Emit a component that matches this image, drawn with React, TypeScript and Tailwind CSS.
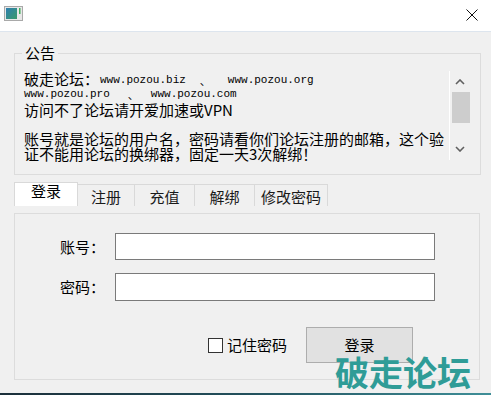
import React from "react";

const TABS = [
  { label: "登录", width: "w-[64px]" },
  { label: "注册", width: "w-[57px]" },
  { label: "充值", width: "w-[60px]" },
  { label: "解绑", width: "w-[60px]" },
  { label: "修改密码", width: "w-[73px]" },
];

function AppIcon() {
  return (
    <svg width="19" height="15" viewBox="0 0 19 15">
      <defs>
        <linearGradient id="ic" x1="0" y1="0" x2="1" y2="1">
          <stop offset="0" stopColor="#2f7fb0" />
          <stop offset="1" stopColor="#3a9a6a" />
        </linearGradient>
      </defs>
      <rect x="0.5" y="0.5" width="18" height="14" fill="#e8e8e8" stroke="#a9a9a9" />
      <rect x="2" y="2" width="11" height="11" fill="url(#ic)" />
      <rect x="15" y="2" width="1.5" height="6" fill="#3fae5b" />
    </svg>
  );
}

function Chevron({ up }: { up?: boolean }) {
  return (
    <svg width="10" height="6" viewBox="0 0 10 6">
      <path
        d={up ? "M1 5 L5 1 L9 5" : "M1 1 L5 5 L9 1"}
        fill="none"
        stroke="#606060"
        strokeWidth="1.6"
      />
    </svg>
  );
}

// urls in the notice are drawn in a small serif mono face
const url = "font-['Liberation_Mono',monospace] text-[11px] leading-[13px] whitespace-pre";
const dun = "text-[11px] leading-[13px]";

export default function App() {
  return (
    <div className="relative flex h-[395px] w-[491px] flex-col overflow-hidden font-['Noto_Sans_CJK_SC',sans-serif] text-black">
      {/* title bar */}
      <div className="flex h-[32px] items-start justify-between border-b border-[#dde5ee] bg-white">
        <div className="ml-[4px] mt-[6px]">
          <AppIcon />
        </div>
        <svg className="mr-[13px] mt-[9px]" width="12" height="12" viewBox="0 0 12 12">
          <path d="M0.5 0.5 L11.5 11.5 M11.5 0.5 L0.5 11.5" stroke="#111" strokeWidth="1" />
        </svg>
      </div>

      {/* body */}
      <div className="flex flex-1 flex-col bg-[#f0f0f0] pl-[14px]">
        <fieldset className="mt-[13px] w-[467px] border border-[#dcdcdc] pb-[14px]">
          <legend className="ml-[7px] px-[3px] text-[15px] leading-[16px]">公告</legend>
          <div className="mt-[10px] flex h-[89px] pl-[9px] pr-[11px]">
            <div className="w-[425px] text-[15px]">
              <div className="flex h-[16px] items-end leading-[16px]">
                <span className="shrink-0 whitespace-nowrap pr-[1px]">破走论坛：</span>
                <span className={url}>www.pozou.biz</span>
                <span className={`ml-[14px] ${dun}`}>、</span>
                <span className={`ml-[17px] ${url}`}>www.pozou.org</span>
              </div>
              <div className="flex h-[15px] items-center">
                <span className={url}>www.pozou.pro</span>
                <span className={`ml-[18px] ${dun}`}>、</span>
                <span className={`ml-[12px] ${url}`}>www.pozou.com</span>
              </div>
              <div className="h-[15px] leading-[15px]">访问不了论坛请开爱加速或VPN</div>
              <div className="h-[15px]" />
              <div className="h-[14px] leading-[14px] whitespace-nowrap">
                账号就是论坛的用户名，密码请看你们论坛注册的邮箱，这个验
              </div>
              <div className="h-[14px] leading-[15px] whitespace-nowrap">
                证不能用论坛的换绑器，固定一天3次解绑！
              </div>
            </div>
            <div className="flex w-[20px] flex-col items-center border-l border-white">
              <div className="flex h-[21px] items-center pl-[1px]">
                <Chevron up />
              </div>
              <div className="ml-[2px] h-[31px] w-[18px] bg-[#cdcdcd]" />
              <div className="flex-1" />
              <div className="flex h-[21px] items-center pb-[1px] pl-[1px]">
                <Chevron />
              </div>
            </div>
          </div>
        </fieldset>

        {/* tabs */}
        <div className="mt-[7px] flex h-[24px] items-end text-[15px] leading-[16px]">
          {TABS.map((t, i) =>
            i === 0 ? (
              <div
                key={t.label}
                className={`${t.width} flex h-[24px] justify-center border border-b-0 border-[#d9d9d9] bg-white`}
              >
                {t.label}
              </div>
            ) : (
              <div
                key={t.label}
                className={`${t.width} flex h-[22px] justify-center border-t border-r border-[#d9d9d9] pt-[4px] text-[#1a1a1a]`}
              >
                {t.label}
              </div>
            )
          )}
        </div>

        {/* tab pane */}
        <div className="mt-[7px] flex h-[167px] w-[466px] flex-col border border-[#dcdcdc] pl-[45px] text-[15px]">
          <div className="mt-[19px] flex items-center">
            <span className="w-[55px] leading-[16px]">账号：</span>
            <div className="h-[27px] w-[320px] border border-[#7a7a7a] bg-white" />
          </div>
          <div className="mt-[13px] flex items-center">
            <span className="w-[55px] leading-[16px]">密码：</span>
            <div className="h-[28px] w-[320px] border border-[#7a7a7a] bg-white" />
          </div>
          <div className="mt-[26px] flex items-center pl-[148px]">
            <div className="h-[15px] w-[15px] border border-[#333] bg-white" />
            <span className="ml-[4px] leading-[16px]">记住密码</span>
            <div className="ml-[19px] flex h-[36px] w-[107px] items-center justify-center border border-[#adadad] bg-[#e1e1e1] leading-[16px]">
              登录
            </div>
          </div>
        </div>
      </div>

      <div className="h-[2px] bg-gradient-to-r from-[#1b2f3a] via-[#22505c] to-[#3f8f98]" />

      {/* watermark */}
      <div className="absolute left-[335px] top-[352px] text-[34px] font-bold leading-[40px] text-[#2f9c97]">
        破走论坛
      </div>
    </div>
  );
}
